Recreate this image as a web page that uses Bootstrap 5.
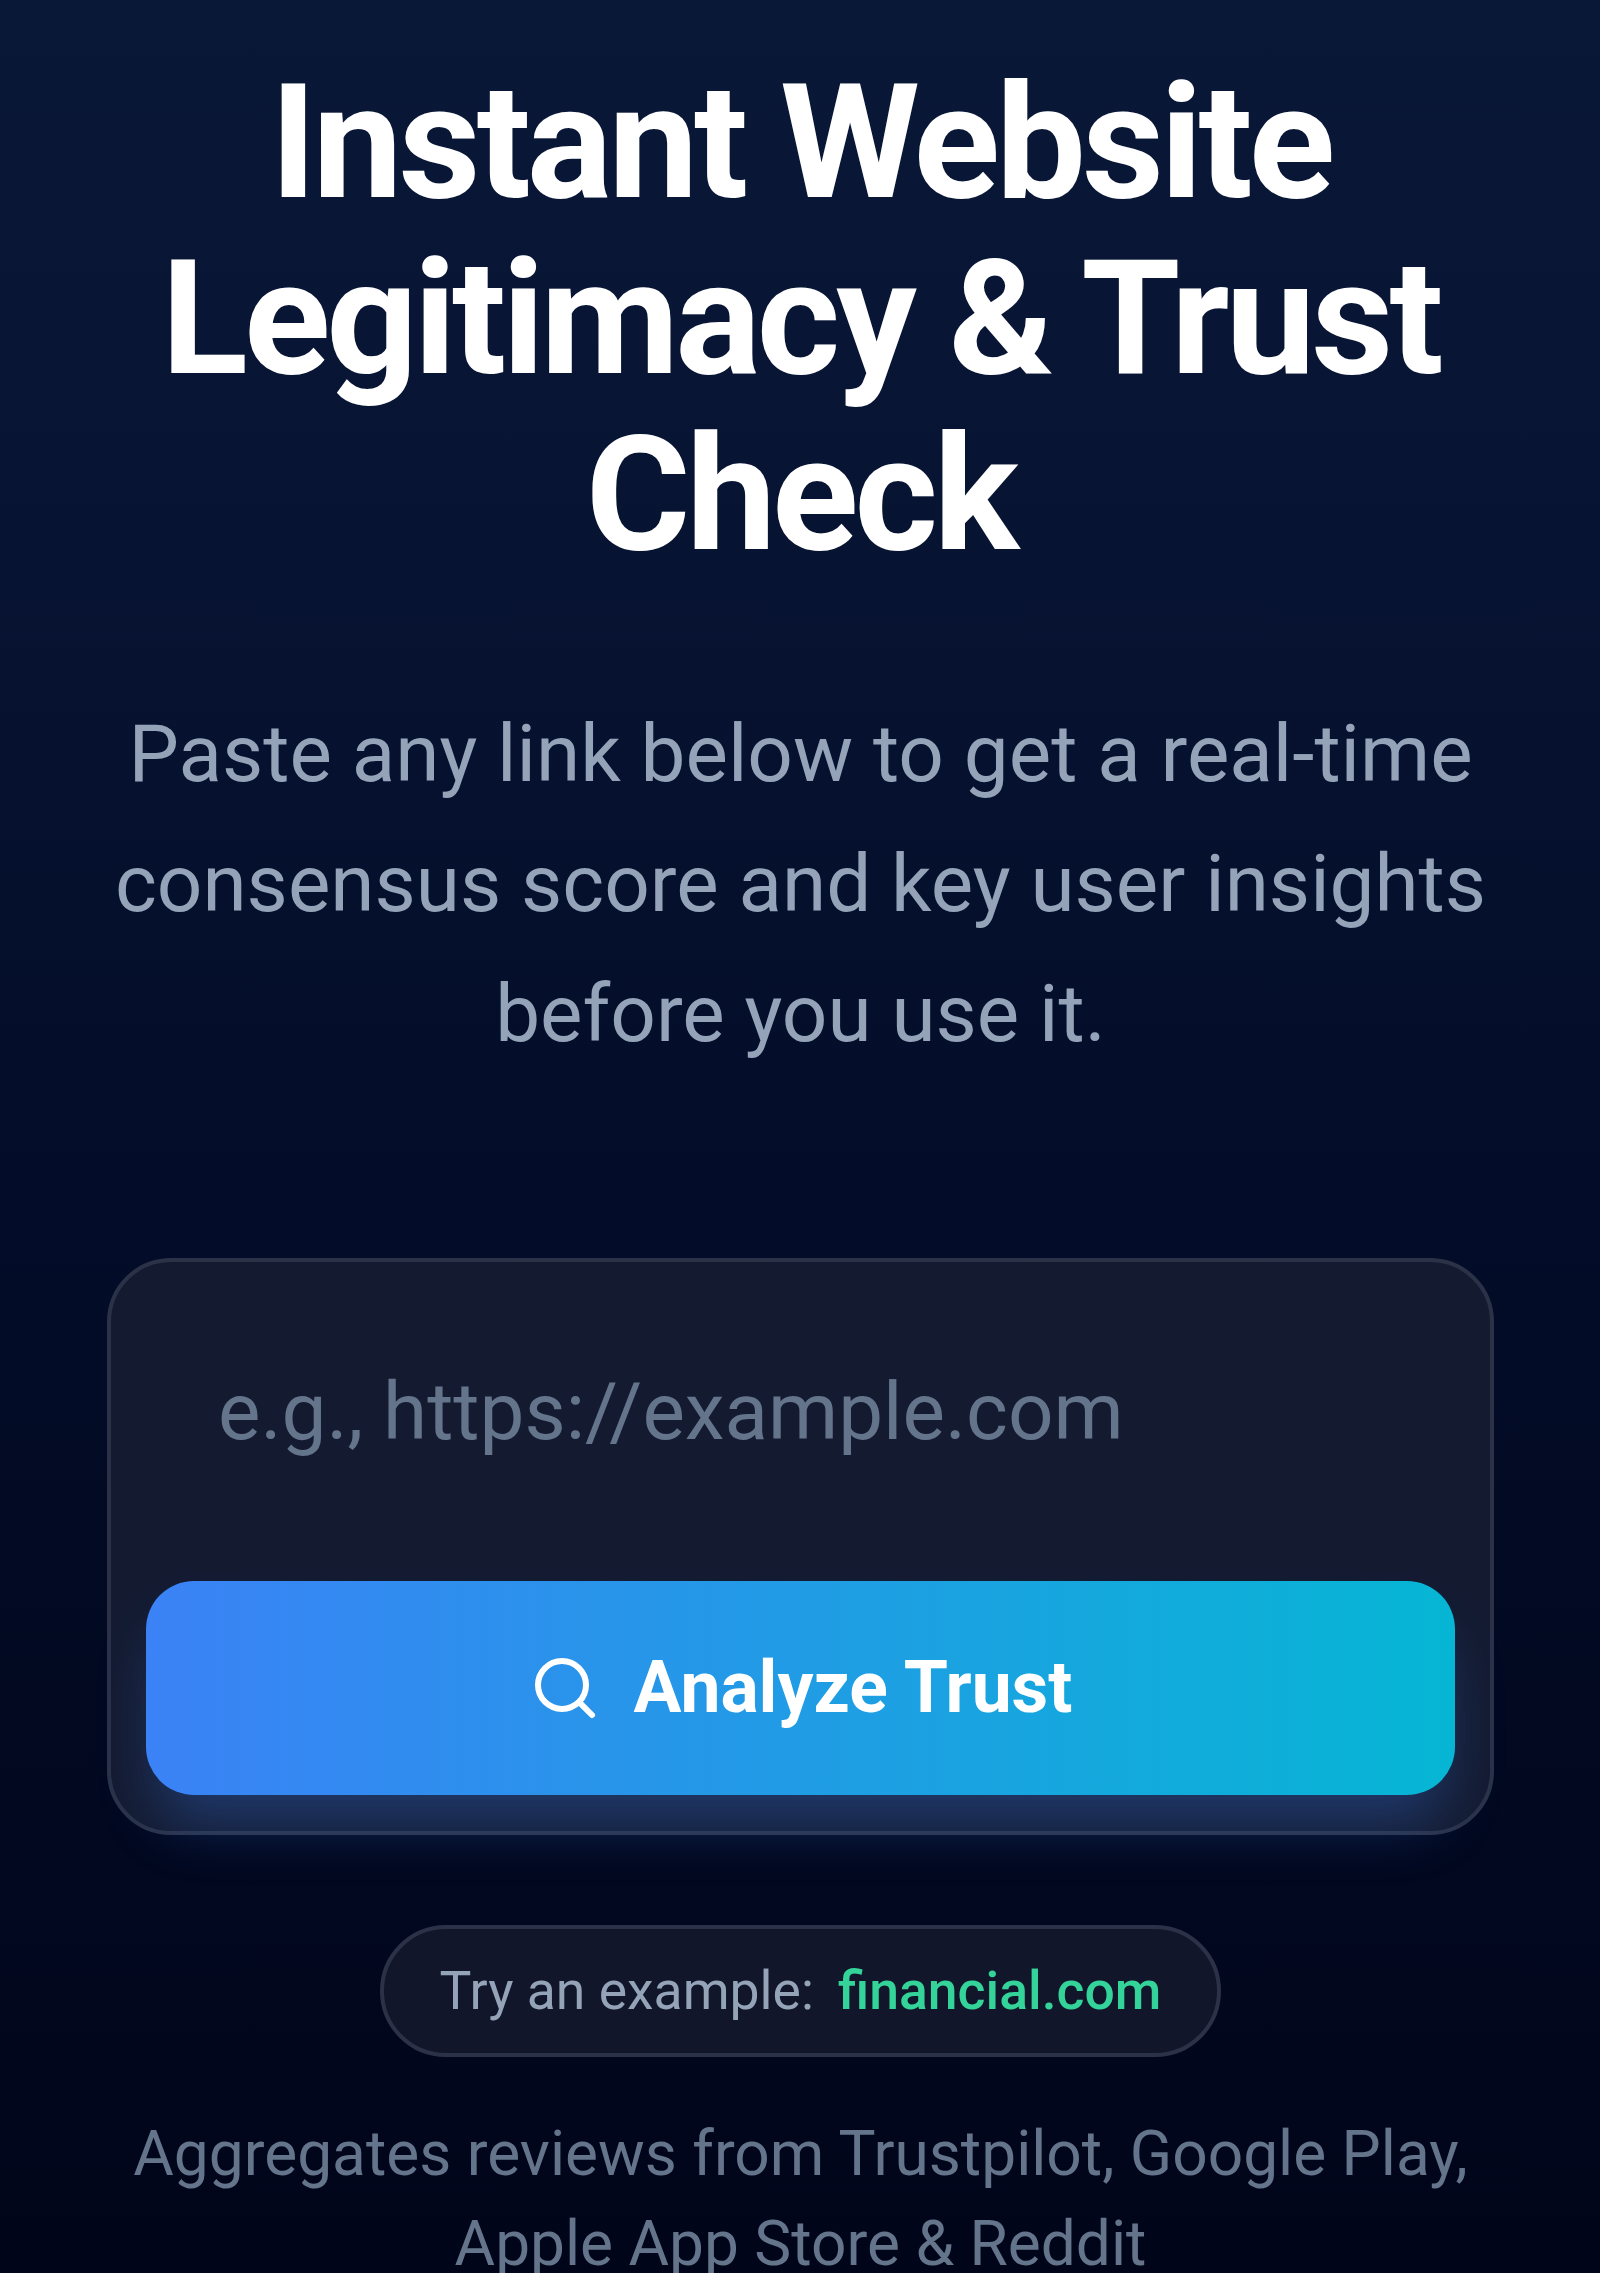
<!DOCTYPE html>
<html lang="en">
<head>
<meta charset="utf-8">
<title>Instant Website Legitimacy &amp; Trust Check</title>
<link href="https://cdn.jsdelivr.net/npm/bootstrap@5.3.0/dist/css/bootstrap.min.css" rel="stylesheet">
<style>
html,body{height:100%;margin:0}
body{font-family:Roboto,"Liberation Sans",sans-serif;overflow:hidden;background:linear-gradient(180deg,#0a1838 0%,#061230 30%,#030d29 52%,#020921 75%,#01051a 100%)}
.hero-wrap{padding:55px 106px 0 107px}
.hero-title{font-size:160px;line-height:176px;font-weight:700;letter-spacing:-4px;color:#fff;margin:0 -60px 106px}
.hero-sub{font-size:80px;line-height:130px;color:#94a3b8;margin:0 -10px 179px}
.search-box{background:#141b31;border:4px solid #2b3248;border-radius:64px;padding:35px 35px 36px}
.search-input{display:block;width:100%;height:230px;margin-bottom:54px;background:transparent;border:0;outline:0;padding:0 72px;font-family:inherit;font-size:80px;color:#fff}
.search-input::placeholder{color:#64748b;opacity:1}
.go-btn{height:214px;border:0;border-radius:48px;background:linear-gradient(90deg,#3b82f6,#06b6d4);color:#fff;font-size:71.4px;font-weight:700;box-shadow:0 40px 60px -12px rgba(59,130,246,.3);gap:33px}
.go-btn svg{width:72px;height:72px}
.try-pill{background:#11162a;border:4px solid #2b3248;border-radius:999px;height:132px;padding:0 56px;font-size:53.5px;color:#94a3b8;margin:90px 0 52px;gap:24px}
.try-link{color:#34d399;font-weight:500;text-decoration:none}
.source-note{font-size:62.2px;line-height:90px;color:#64748b;margin:0 -10px}
</style>
</head>
<body>
<main class="hero-wrap text-center">
  <h1 class="hero-title">Instant Website Legitimacy &amp; Trust Check</h1>
  <p class="hero-sub">Paste any link below to get a real-time consensus score and key user insights before you use it.</p>
  <form class="search-box">
    <input class="search-input" type="text" placeholder="e.g., https://example.com" aria-label="Website URL">
    <button class="go-btn btn d-flex align-items-center justify-content-center w-100" type="button">
      <svg viewBox="0 0 24 24" fill="none" stroke="#fff" stroke-width="2" stroke-linecap="round" stroke-linejoin="round"><circle cx="11" cy="11" r="8"/><path d="m21 21-4.3-4.3"/></svg>
      <span>Analyze Trust</span>
    </button>
  </form>
  <div class="try-pill d-inline-flex align-items-center">
    <span>Try an example:</span>
    <a class="try-link" href="#">financial.com</a>
  </div>
  <p class="source-note">Aggregates reviews from Trustpilot, Google Play, Apple App Store &amp; Reddit</p>
</main>
</body>
</html>
